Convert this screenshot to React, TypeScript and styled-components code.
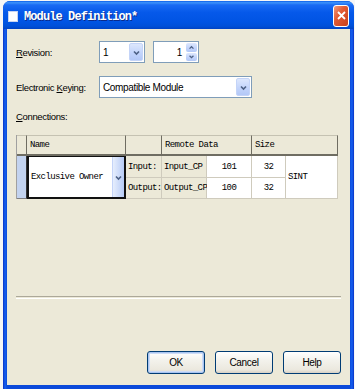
import React from "react";
import styled, { createGlobalStyle } from "styled-components";

const GlobalStyle = createGlobalStyle`
    html, body
    {
        margin: 0;
        padding: 0;
        overflow: hidden;
        background: #f6f6f6;
    }
`;

const uiFont = `"Liberation Sans", Arial, sans-serif`;
const gridFont = `"Liberation Mono", "DejaVu Sans Mono", monospace`;

interface IChevronProps
{
    up? : boolean
    size? : number
}

const Chevron = ({ up, size = 9 } : IChevronProps) => (
    <svg width={size} height={size} viewBox="0 0 9 9">
        <path
            d={up ? "M2 6 L4.5 3.5 L7 6" : "M2 3.5 L4.5 6 L7 3.5"}
            fill="none"
            stroke="#4d6185"
            strokeWidth="1.6"
        />
    </svg>
);

const App = () =>
{
    return (
        <>
            <GlobalStyle />
            <Window>
                <TitleBar>
                    <AppIcon />
                    <Title>Module Definition*</Title>
                    <CloseButton>
                        <svg width="9" height="9" viewBox="0 0 9 9">
                            <path d="M1 1 L8 8 M8 1 L1 8" stroke="white" strokeWidth="1.8" />
                        </svg>
                    </CloseButton>
                </TitleBar>

                <Client>
                    <FieldRow>
                        <Label><u>R</u>evision:</Label>
                        <Combo width={46}>
                            <ComboText>1</ComboText>
                            <ArrowButton><Chevron /></ArrowButton>
                        </Combo>
                        <Spinner>
                            <SpinText>1</SpinText>
                            <SpinButtons>
                                <SpinButton><Chevron up size={7} /></SpinButton>
                                <SpinButton><Chevron size={7} /></SpinButton>
                            </SpinButtons>
                        </Spinner>
                    </FieldRow>

                    <FieldRow $gap={13}>
                        <Label>Electronic <u>K</u>eying:</Label>
                        <Combo width={153}>
                            <ComboText>Compatible Module</ComboText>
                            <ArrowButton><Chevron /></ArrowButton>
                        </Combo>
                    </FieldRow>

                    <SectionLabel><u>C</u>onnections:</SectionLabel>

                    <Table>
                        <HeadCell />
                        <HeadCell>Name</HeadCell>
                        <HeadCell />
                        <HeadCell $span={2}>Remote Data</HeadCell>
                        <HeadCell $span={2}>Size</HeadCell>

                        <RowHead />
                        <NameCell>
                            <NameText>Exclusive Owner</NameText>
                            <NameArrow><Chevron /></NameArrow>
                        </NameCell>
                        <Cell $gray>Input:</Cell>
                        <Cell $gray>Input_CP</Cell>
                        <Cell $center>101</Cell>
                        <Cell $center>32</Cell>
                        <TypeCell>SINT</TypeCell>

                        <Cell $gray>Output:</Cell>
                        <Cell $gray>Output_CP</Cell>
                        <Cell $center>100</Cell>
                        <Cell $center>32</Cell>
                    </Table>

                    <Separator />

                    <ButtonBar>
                        <Button $default>OK</Button>
                        <Button>Cancel</Button>
                        <Button>Help</Button>
                    </ButtonBar>
                </Client>
            </Window>
        </>
    );
};

const Window = styled.div`
    width: 351px;
    height: 388px;
    margin: 1px 0 0 3px;
    box-sizing: border-box;
    padding: 0 4px 4px;
    display: flex;
    flex-direction: column;
    background: linear-gradient(to right, #0831c4 0px, #1660f0 2px, #0b4ada 4px, #0b4ada calc(100% - 4px), #1660f0 calc(100% - 2px), #0831c4 100%);
    border-radius: 7px 7px 0 0;
    overflow: hidden;
`;

const TitleBar = styled.div`
    height: 31px;
    margin: 0 -4px;
    padding: 0 5px 0 5px;
    display: flex;
    align-items: center;
    background: linear-gradient(to bottom, #0a5de8 0%, #3d93fb 6%, #1a6bf3 14%, #0659ea 40%, #0054e3 75%, #0050d8 90%, #0043c4 100%);
`;

const AppIcon = styled.div`
    width: 10px;
    height: 11px;
    margin-top: 2px;
    background: #ffffff;
    border: 1px solid #c8d4f0;
    box-sizing: border-box;
`;

const Title = styled.span`
    flex: 1;
    margin-left: 6px;
    margin-top: 3px;
    font-family: ${gridFont};
    font-weight: bold;
    font-size: 12px;
    letter-spacing: -0.9px;
    color: #ffffff;
    text-shadow: 1px 1px 0 #0a2a8a;
`;

const CloseButton = styled.div`
    width: 16px;
    height: 22px;
    margin-top: 1px;
    box-sizing: border-box;
    display: flex;
    align-items: center;
    justify-content: center;
    border: 1px solid #ffffff;
    border-radius: 3px;
    background: linear-gradient(to bottom right, #f09a7c 0%, #e35b34 40%, #c7401c 100%);
`;

const Client = styled.div`
    flex: 1;
    display: flex;
    flex-direction: column;
    padding: 12px 9px 11px 9px;
    background: #ece9d8;
    font-family: ${uiFont};
    font-size: 9.5px;
    letter-spacing: -0.35px;
    color: #000000;
`;

const FieldRow = styled.div<{ $gap? : number }>`
    display: flex;
    align-items: center;
    gap: 8px;
    height: 22px;
    margin-top: ${props => props.$gap ?? 0}px;
`;

const Label = styled.span`
    width: 75px;
    u
    {
        text-decoration: underline;
    }
`;

const Combo = styled.div<{ width : number }>`
    width: ${props => props.width}px;
    height: 22px;
    box-sizing: border-box;
    display: flex;
    align-items: stretch;
    border: 1px solid #7f9db9;
    background: #ffffff;
`;

const ComboText = styled.span`
    flex: 1;
    display: flex;
    align-items: center;
    padding-left: 3px;
    font-size: 10px;
`;

const ArrowButton = styled.div`
    width: 14px;
    margin: 1px;
    display: flex;
    align-items: center;
    justify-content: center;
    border-radius: 2px;
    background: linear-gradient(to bottom, #dde7fd, #c1d3fb 60%, #b3c8f7);
    border: 1px solid #c4d4f8;
    box-sizing: border-box;
`;

const Spinner = styled(Combo).attrs({ width: 46 })``;

const SpinText = styled.span`
    flex: 1;
    display: flex;
    align-items: center;
    justify-content: flex-end;
    padding-right: 3px;
    font-size: 10px;
`;

const SpinButtons = styled.div`
    width: 11px;
    margin: 1px;
    display: flex;
    flex-direction: column;
    gap: 1px;
`;

const SpinButton = styled.div`
    flex: 1;
    display: flex;
    align-items: center;
    justify-content: center;
    border-radius: 2px;
    background: linear-gradient(to bottom, #dde7fd, #c1d3fb 60%, #b3c8f7);
`;

const SectionLabel = styled.div`
    height: 12px;
    line-height: 12px;
    margin-top: 13px;
`;

const Table = styled.div`
    display: grid;
    grid-template-columns: 10px 99px 36px 45px 45px 34px 52px;
    grid-template-rows: 21px 22px 21px;
    width: 322px;
    margin-top: 12px;
    border-left: 1px solid #a0a0a0;
    font-family: ${gridFont};
    font-size: 9px;
    letter-spacing: -0.6px;
    color: #000000;
`;

const HeadCell = styled.div<{ $span? : number }>`
    grid-column: span ${props => props.$span ?? 1};
    display: flex;
    align-items: center;
    padding-left: 3px;
    box-sizing: border-box;
    background: #ece9d8;
    border-top: 1px solid #c5c2b2;
    border-right: 1px solid #6f6d62;
    border-bottom: 2px solid #6f6d62;
`;

const RowHead = styled.div`
    grid-row: 2 / 4;
    background: #c3d3ef;
    border-right: 1px solid #333333;
    border-bottom: 1px solid #808080;
`;

const NameCell = styled.div`
    grid-row: 2 / 4;
    display: flex;
    box-sizing: border-box;
    background: #ffffff;
    border: 2px solid #111111;
    border-top-width: 1px;
`;

const NameText = styled.span`
    flex: 1;
    display: flex;
    align-items: center;
    padding-left: 2px;
`;

const NameArrow = styled.div`
    width: 11px;
    display: flex;
    align-items: center;
    justify-content: center;
    background: linear-gradient(to right, #e6eefd, #b7cbf6);
    border-left: 1px solid #c4d4f8;
`;

const Cell = styled.div<{ $gray? : boolean, $center? : boolean }>`
    display: flex;
    align-items: center;
    justify-content: ${props => props.$center ? "center" : "flex-start"};
    padding-left: ${props => props.$center ? 0 : 2}px;
    box-sizing: border-box;
    background: ${props => props.$gray ? "#ece9d8" : "#ffffff"};
    border-right: 1px solid #cfcbbd;
    border-bottom: 1px solid #cfcbbd;
`;

const TypeCell = styled(Cell)`
    grid-row: 2 / 4;
    grid-column: 7;
`;

const Separator = styled.div`
    height: 1px;
    margin-top: 97px;
    border-top: 1px solid #aca899;
    border-bottom: 1px solid #ffffff;
`;

const ButtonBar = styled.div`
    display: flex;
    justify-content: flex-end;
    gap: 10px;
    margin-top: 52px;
`;

const Button = styled.div<{ $default? : boolean }>`
    width: 58px;
    height: 23px;
    box-sizing: border-box;
    display: flex;
    align-items: center;
    justify-content: center;
    border: 1px solid #003c74;
    border-radius: 3px;
    background: linear-gradient(to bottom, #ffffff 0%, #f3f2ec 40%, #ebe8de 85%, #d6d0c5 100%);
    box-shadow: ${props => props.$default ? "inset 0 0 0 1px #a8c4f0, inset 0 0 0 2px #cddcf6" : "none"};
    font-size: 10px;
`;

export default App;
